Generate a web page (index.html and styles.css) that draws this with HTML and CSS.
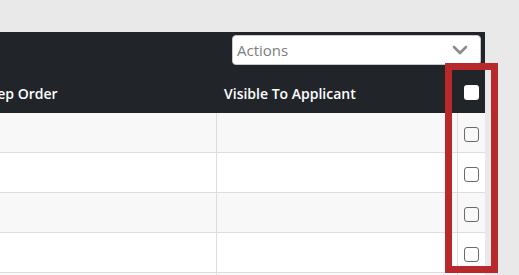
FILE: index.html
```html
<!DOCTYPE html>
<html lang="en">
<head>
<meta charset="UTF-8" />
<meta name="viewport" content="width=device-width, initial-scale=1" />
<title>Steps</title>
<link rel="stylesheet" href="styles.css">
</head>
<body>

<div class="panel">
  <div class="toolbar">
    <div class="select">
      <span>Actions</span>
      <svg class="chevron" width="16" height="10" viewBox="0 0 16 10">
        <polyline points="2,2 8,8 14,2" fill="none" stroke="#8c8c8c" stroke-width="2.6" stroke-linecap="round" stroke-linejoin="round" />
      </svg>
    </div>
  </div>

  <table class="grid">
    <colgroup>
      <col class="c-order" />
      <col class="c-visible" />
      <col class="c-check" />
    </colgroup>
    <thead>
      <tr>
        <th>Step Order</th>
        <th>Visible To Applicant</th>
        <th class="check"><span class="box box-head"></span></th>
      </tr>
    </thead>
    <tbody>
      <tr><td></td><td></td><td class="check"><span class="box"></span></td></tr>
      <tr><td></td><td></td><td class="check"><span class="box"></span></td></tr>
      <tr><td></td><td></td><td class="check"><span class="box"></span></td></tr>
      <tr><td></td><td></td><td class="check"><span class="box"></span></td></tr>
      <tr><td></td><td></td><td class="check"><span class="box"></span></td></tr>
    </tbody>
  </table>

  <div class="highlight"></div>
</div>

</body>
</html>
```

FILE: styles.css
```css
body {
  margin: 0;
  font-family: 'Open Sans', 'Noto Sans', sans-serif;
  background-color: #e9e9e9;
  height: 275px;
  overflow: hidden;
}
.panel {
  position: relative;
  width: 485px;
  margin-top: 32px;
}
.toolbar {
  background-color: #212529;
  height: 34px;
  display: flex;
  justify-content: flex-end;
  padding: 3px 4px 0 0;
  box-sizing: border-box;
}
.select {
  width: 249px;
  height: 30px;
  box-sizing: border-box;
  background-color: #fff;
  border: 1px solid #c8c8c8;
  border-radius: 4px;
  display: flex;
  align-items: center;
  justify-content: space-between;
  padding: 0 12px 0 4px;
  font-size: 15px;
  color: #7d7d7d;
}
.chevron {
  display: block;
}
.grid {
  table-layout: fixed;
  border-collapse: separate;
  border-spacing: 0;
  width: 508px;
  margin-left: -23px;
}
.c-order { width: 240px; }
.c-visible { width: 241px; }
.c-check { width: 27px; }
.grid th {
  background-color: #212529;
  color: #fff;
  font-size: 14px;
  font-weight: 600;
  line-height: 17px;
  text-align: left;
  padding: 19px 7px 11px;
  white-space: nowrap;
}
.grid th.check {
  padding: 19px 0 11px;
  text-align: center;
}
.grid td {
  height: 40px;
  padding: 0;
  box-sizing: border-box;
  border-bottom: 1px solid #dddddd;
  border-right: 1px solid #dddddd;
}
.grid td.check {
  text-align: center;
  vertical-align: middle;
  border-right: none;
}
.grid tbody tr:nth-child(odd) td {
  background-color: #f8f8f8;
}
.grid tbody tr:nth-child(even) td {
  background-color: #fff;
}
.box {
  display: inline-block;
  width: 15px;
  height: 15px;
  box-sizing: border-box;
  border: 1px solid #6a6a6a;
  border-radius: 3px;
  vertical-align: middle;
}
.box-head {
  border: none;
  background-color: #fff;
  vertical-align: -1px;
}
.highlight {
  position: absolute;
  left: 445px;
  top: 31px;
  width: 53px;
  height: 210px;
  box-sizing: border-box;
  border: 7px solid #b8292b;
}
```
